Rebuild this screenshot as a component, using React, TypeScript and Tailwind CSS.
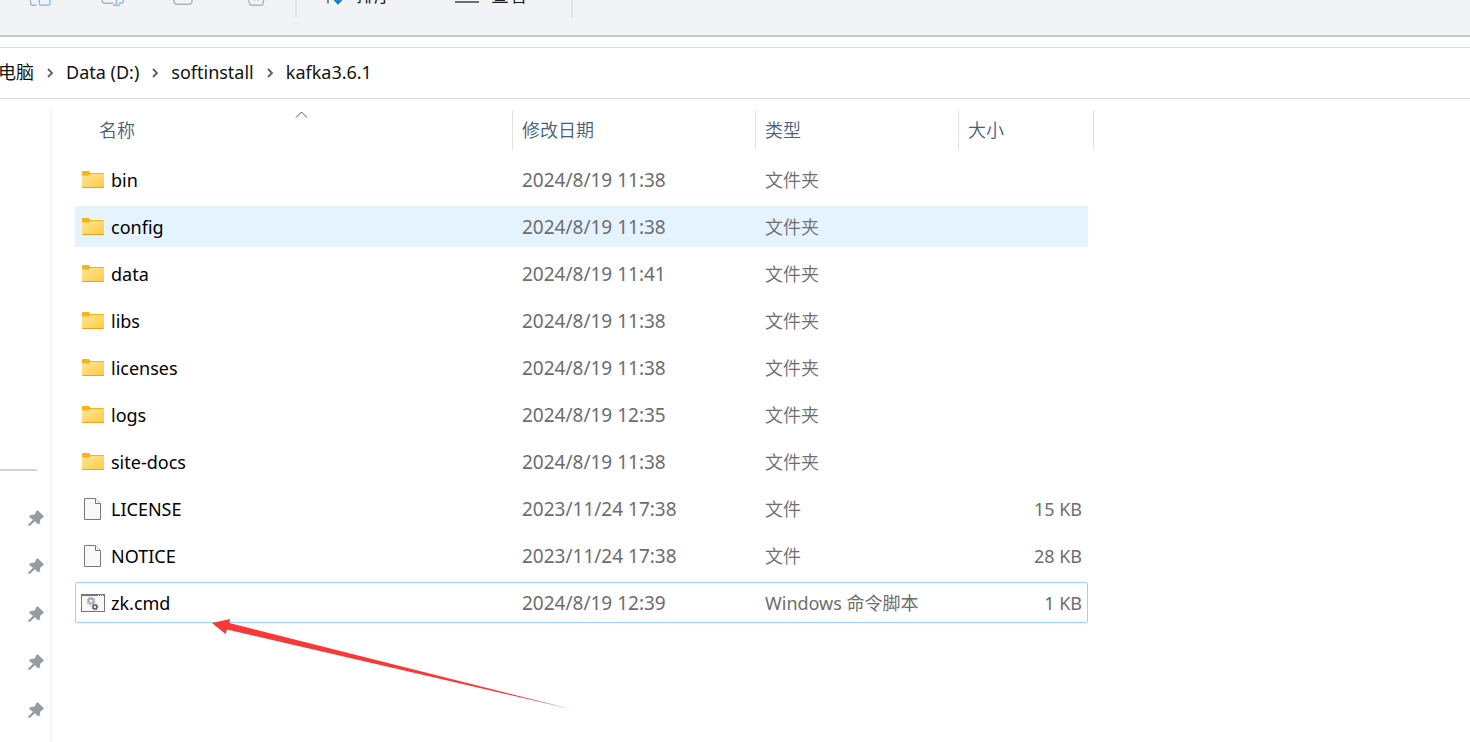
import React from "react";

type Kind = "folder" | "file" | "cmd";

interface Entry {
  name: string;
  date: string;
  type: string;
  size: string;
  kind: Kind;
  state?: "hover" | "focus";
}

const entries: Entry[] = [
  { name: "bin", date: "2024/8/19 11:38", type: "文件夹", size: "", kind: "folder" },
  { name: "config", date: "2024/8/19 11:38", type: "文件夹", size: "", kind: "folder", state: "hover" },
  { name: "data", date: "2024/8/19 11:41", type: "文件夹", size: "", kind: "folder" },
  { name: "libs", date: "2024/8/19 11:38", type: "文件夹", size: "", kind: "folder" },
  { name: "licenses", date: "2024/8/19 11:38", type: "文件夹", size: "", kind: "folder" },
  { name: "logs", date: "2024/8/19 12:35", type: "文件夹", size: "", kind: "folder" },
  { name: "site-docs", date: "2024/8/19 11:38", type: "文件夹", size: "", kind: "folder" },
  { name: "LICENSE", date: "2023/11/24 17:38", type: "文件", size: "15 KB", kind: "file" },
  { name: "NOTICE", date: "2023/11/24 17:38", type: "文件", size: "28 KB", kind: "file" },
  { name: "zk.cmd", date: "2024/8/19 12:39", type: "Windows 命令脚本", size: "1 KB", kind: "cmd", state: "focus" },
];

function FolderIcon() {
  return (
    <svg width="24" height="24" viewBox="0 0 24 24" aria-hidden="true">
      <defs>
        <linearGradient id="folder" x1="0" y1="0" x2="1" y2="1">
          <stop offset="0" stopColor="#ffe69a" />
          <stop offset="1" stopColor="#ffca3e" />
        </linearGradient>
      </defs>
      <path d="M1 4a1 1 0 0 1 1-1h6l1.500 2H22a1 1 0 0 1 1 1v4H1z" fill="#f5b41a" />
      <path d="M1 7.500h7L9.500 6H23v13a1 1 0 0 1-1 1H2a1 1 0 0 1-1-1z" fill="url(#folder)" />
      <path d="M1 19h22a1 1 0 0 1-1 1H2a1 1 0 0 1-1-1z" fill="#e9a520" />
    </svg>
  );
}

function FileIcon() {
  return (
    <svg width="24" height="24" viewBox="0 0 24 24" fill="#f9f9f9" stroke="#7a7976" aria-hidden="true">
      <path d="M3.500 1.500H14.500L19.500 6.500V22.500H3.500z" />
      <path d="M14.500 1.500V6.500H19.500" />
    </svg>
  );
}

function CmdIcon() {
  return (
    <svg width="24" height="24" viewBox="0 0 24 24" fill="none" aria-hidden="true">
      <rect x="0.500" y="3.500" width="23" height="17" fill="#f8f8f8" stroke="#777673" />
      <path d="M0 4h24" stroke="#777673" strokeWidth="2" />
      <path d="M17 4.500h1M19 4.500h1M21 4.500h1" stroke="#fff" />
      <circle cx="10" cy="10" r="2.500" stroke="#a3adb7" strokeWidth="1.800" />
      <circle cx="10" cy="10" r="3.800" stroke="#a3adb7" strokeWidth="1.200" strokeDasharray="1.500 1.485" />
      <circle cx="14" cy="16" r="1.900" stroke="#59636b" strokeWidth="1.500" />
      <circle cx="14" cy="16" r="2.900" stroke="#59636b" strokeDasharray="1.200 1.078" />
    </svg>
  );
}

const icons: Record<Kind, () => React.JSX.Element> = {
  folder: FolderIcon,
  file: FileIcon,
  cmd: CmdIcon,
};

function PinIcon() {
  return (
    <svg width="16" height="16" viewBox="0 0 16 16" aria-hidden="true">
      <path
        d="M8.300 1.300Q9.500 0 10.800 1.200L15.100 5.400Q16.300 6.600 15 7.600L12.400 9.400L11.600 13.600Q11 15.200 9.800 14.100L6.900 11.300L2 15.800L0.200 16L0.300 14.400L5 9.800L1.700 7.200Q0.600 5.700 2.100 5.300L6.600 4.500z"
        fill="#919ca3"
      />
    </svg>
  );
}

function Chevron() {
  return (
    <svg className="mt-[2px] w-8 shrink-0" height="10" viewBox="0 0 32 10" fill="none" aria-hidden="true">
      <path d="M14 1L18 5L14 9" stroke="#5f5f5f" strokeWidth="1.800" />
    </svg>
  );
}

const iconButton = "flex w-[73px] shrink-0 justify-center";

function Toolbar() {
  return (
    <header className="h-[37px] overflow-hidden border-b-2 border-[#c1c9d0] bg-[#f2f3f6]">
      <div className="-mt-[18px] flex h-9 items-start text-lg leading-6 text-[#1b1b1b]">
        <button type="button" aria-label="复制" className="ml-1 flex w-[72px] shrink-0 justify-center">
          <svg width="24" height="24" viewBox="0 0 24 24" fill="none" strokeWidth="1.400">
            <path d="M8.500 23.300H5A2.500 2.500 0 0 1 2.500 20.800V3H8.500" stroke="#b0b3b7" />
            <rect x="11.300" y="3" width="10.700" height="20.300" rx="2" stroke="#8cc4ee" />
          </svg>
        </button>
        <button type="button" aria-label="重命名" className={iconButton}>
          <svg width="24" height="24" viewBox="0 0 24 24" fill="none" strokeWidth="1.400">
            <path d="M12.500 21.200H4A3 3 0 0 1 1 18.200V10H12.500M18 21.200H19.500A3 3 0 0 0 22.500 18.200V10H18" stroke="#b0b3b7" />
            <path d="M15.500 5V23.300M12 23.300H19" stroke="#8cc4ee" strokeWidth="1.600" />
          </svg>
        </button>
        <button type="button" aria-label="共享" className="flex w-[68px] shrink-0 justify-center">
          <svg width="24" height="24" viewBox="0 0 24 24" fill="none" strokeWidth="1.400">
            <path d="M3 8V19.500A3 3 0 0 0 6 22.300H18A3 3 0 0 0 21 19.500V8" stroke="#b0b3b7" />
          </svg>
        </button>
        <button type="button" aria-label="删除" className="flex w-[78px] shrink-0 justify-center">
          <svg width="24" height="24" viewBox="0 0 24 24" fill="none" strokeWidth="1.400">
            <path d="M3.500 7L5.300 21Q5.700 23.300 8 23.300H16.500Q18.800 23.300 19.200 21L21 7" stroke="#b0b3b7" />
            <path d="M10 14L14.500 18.500M14.500 14L10 18.500" stroke="#b0b3b7" />
          </svg>
        </button>
        <span className="h-9 w-0.5 shrink-0 bg-[#e3e4e7]" />
        <button type="button" className="ml-[25px] flex shrink-0 gap-2 leading-[26px]">
          <svg width="26" height="24" viewBox="0 0 26 24" fill="none">
            <path d="M6 4V21.500" stroke="#555" strokeWidth="1.400" />
            <path d="M16 4V21M11.500 16.500L16 21.300L20.500 16.500" stroke="#0f78d4" strokeWidth="2" />
          </svg>
          排序
        </button>
        <button type="button" className="ml-[63px] flex shrink-0 gap-3 leading-[26px]">
          <svg width="24" height="24" viewBox="0 0 24 24" fill="none" stroke="#444" strokeWidth="1.400">
            <path d="M0 8H24M0 14H24M0 20H24" />
          </svg>
          查看
        </button>
        <span className="ml-11 h-9 w-0.5 shrink-0 bg-[#e3e4e7]" />
      </div>
    </header>
  );
}

function AddressBar() {
  return (
    <nav aria-label="路径" className="mt-[10px] h-[52px] overflow-hidden border-y border-[#d9d9d9]">
      <div className="-ml-5 flex h-full items-center pb-[2px] text-lg leading-6 whitespace-nowrap text-[#111]">
        <a href="#pc">此电脑</a>
        <Chevron />
        <a href="#data">Data (D:)</a>
        <Chevron />
        <a href="#softinstall">softinstall</a>
        <Chevron />
        <a href="#kafka">kafka3.6.1</a>
      </div>
    </nav>
  );
}

function Sidebar() {
  return (
    <aside className="mt-[11px] w-[52px] shrink-0 border-r-2 border-[#f5f5f5] pt-[359px]">
      <hr className="mr-[13px] border-t-2 border-[#d4d4d4]" />
      <ul className="mt-[23px]">
        {[1, 2, 3, 4, 5].map((n) => (
          <li key={n} className="h-12">
            <button type="button" aria-label={"已固定 " + n} className="flex h-12 w-full items-center justify-end pr-[6px]">
              <PinIcon />
            </button>
          </li>
        ))}
      </ul>
    </aside>
  );
}

function FileTable() {
  return (
    <table className="mt-[5px] w-[1013px] table-fixed border-separate border-spacing-x-0 border-spacing-y-[6px] text-lg leading-6 whitespace-nowrap">
      <colgroup>
        <col className="w-[437px]" />
        <col className="w-[243px]" />
        <col className="w-[203px]" />
        <col className="w-[130px]" />
      </colgroup>
      <thead>
        <tr className="h-[43px] text-left align-top text-[#46607c]">
          <th scope="col" className="p-0 font-[350]" aria-sort="ascending">
            <button type="button" className="relative flex h-10 w-full items-center pl-6">
              名称
              <svg className="absolute top-px left-[220px]" width="13" height="8" viewBox="0 0 13 8" fill="none" aria-hidden="true">
                <path d="M1 6.500L6.500 1L12 6.500" stroke="#555" />
              </svg>
            </button>
          </th>
          <th scope="col" className="p-0 font-[350]">
            <button type="button" className="flex h-10 w-full items-center border-l border-[#e2e2e2] pl-[9px]">修改日期</button>
          </th>
          <th scope="col" className="p-0 font-[350]">
            <button type="button" className="flex h-10 w-full items-center border-l border-[#e2e2e2] pl-[9px]">类型</button>
          </th>
          <th scope="col" className="p-0 font-[350]">
            <button type="button" className="flex h-10 w-[136px] items-center border-x border-[#e2e2e2] pl-[9px]">大小</button>
          </th>
        </tr>
      </thead>
      <tbody className="text-[#6d6d6d]">
        {entries.map((e) => {
          const Icon = icons[e.kind];
          return (
            <tr
              key={e.name}
              className={
                e.state === "hover"
                  ? "h-[41px] rounded-xs bg-[#e5f3ff]"
                  : e.state === "focus"
                    ? "h-[41px] rounded-xs outline-1 -outline-offset-1 outline-[#99d1ff]"
                    : "h-[41px]"
              }
            >
              <td className="p-0 pl-[6px] text-black">
                <span className="flex items-center gap-[6px]">
                  <Icon />
                  {e.name}
                </span>
              </td>
              <td className="p-0 pl-[10px] text-[19px]">{e.date}</td>
              <td className={e.kind === "cmd" ? "p-0 pl-[10px]" : "p-0 pl-[10px] font-[350]"}>{e.type}</td>
              <td className="p-0 pr-[6px] text-right">{e.size}</td>
            </tr>
          );
        })}
      </tbody>
    </table>
  );
}

export default function App() {
  return (
    <div className="flex min-h-screen flex-col overflow-x-hidden bg-white font-['Noto_Sans','Noto_Sans_CJK_SC',sans-serif]">
      <Toolbar />
      <AddressBar />
      <div className="flex grow">
        <Sidebar />
        <main className="relative ml-[23px] min-w-0 grow">
          <FileTable />
          <svg
            className="pointer-events-none absolute top-[519px] left-[137px]"
            width="360"
            height="94"
            viewBox="0 0 360 94"
            aria-hidden="true"
          >
            <path d="M0 5L18 1L17.500 5L359 91L15 11.500L13.500 16z" fill="#fb3838" />
          </svg>
        </main>
      </div>
    </div>
  );
}
